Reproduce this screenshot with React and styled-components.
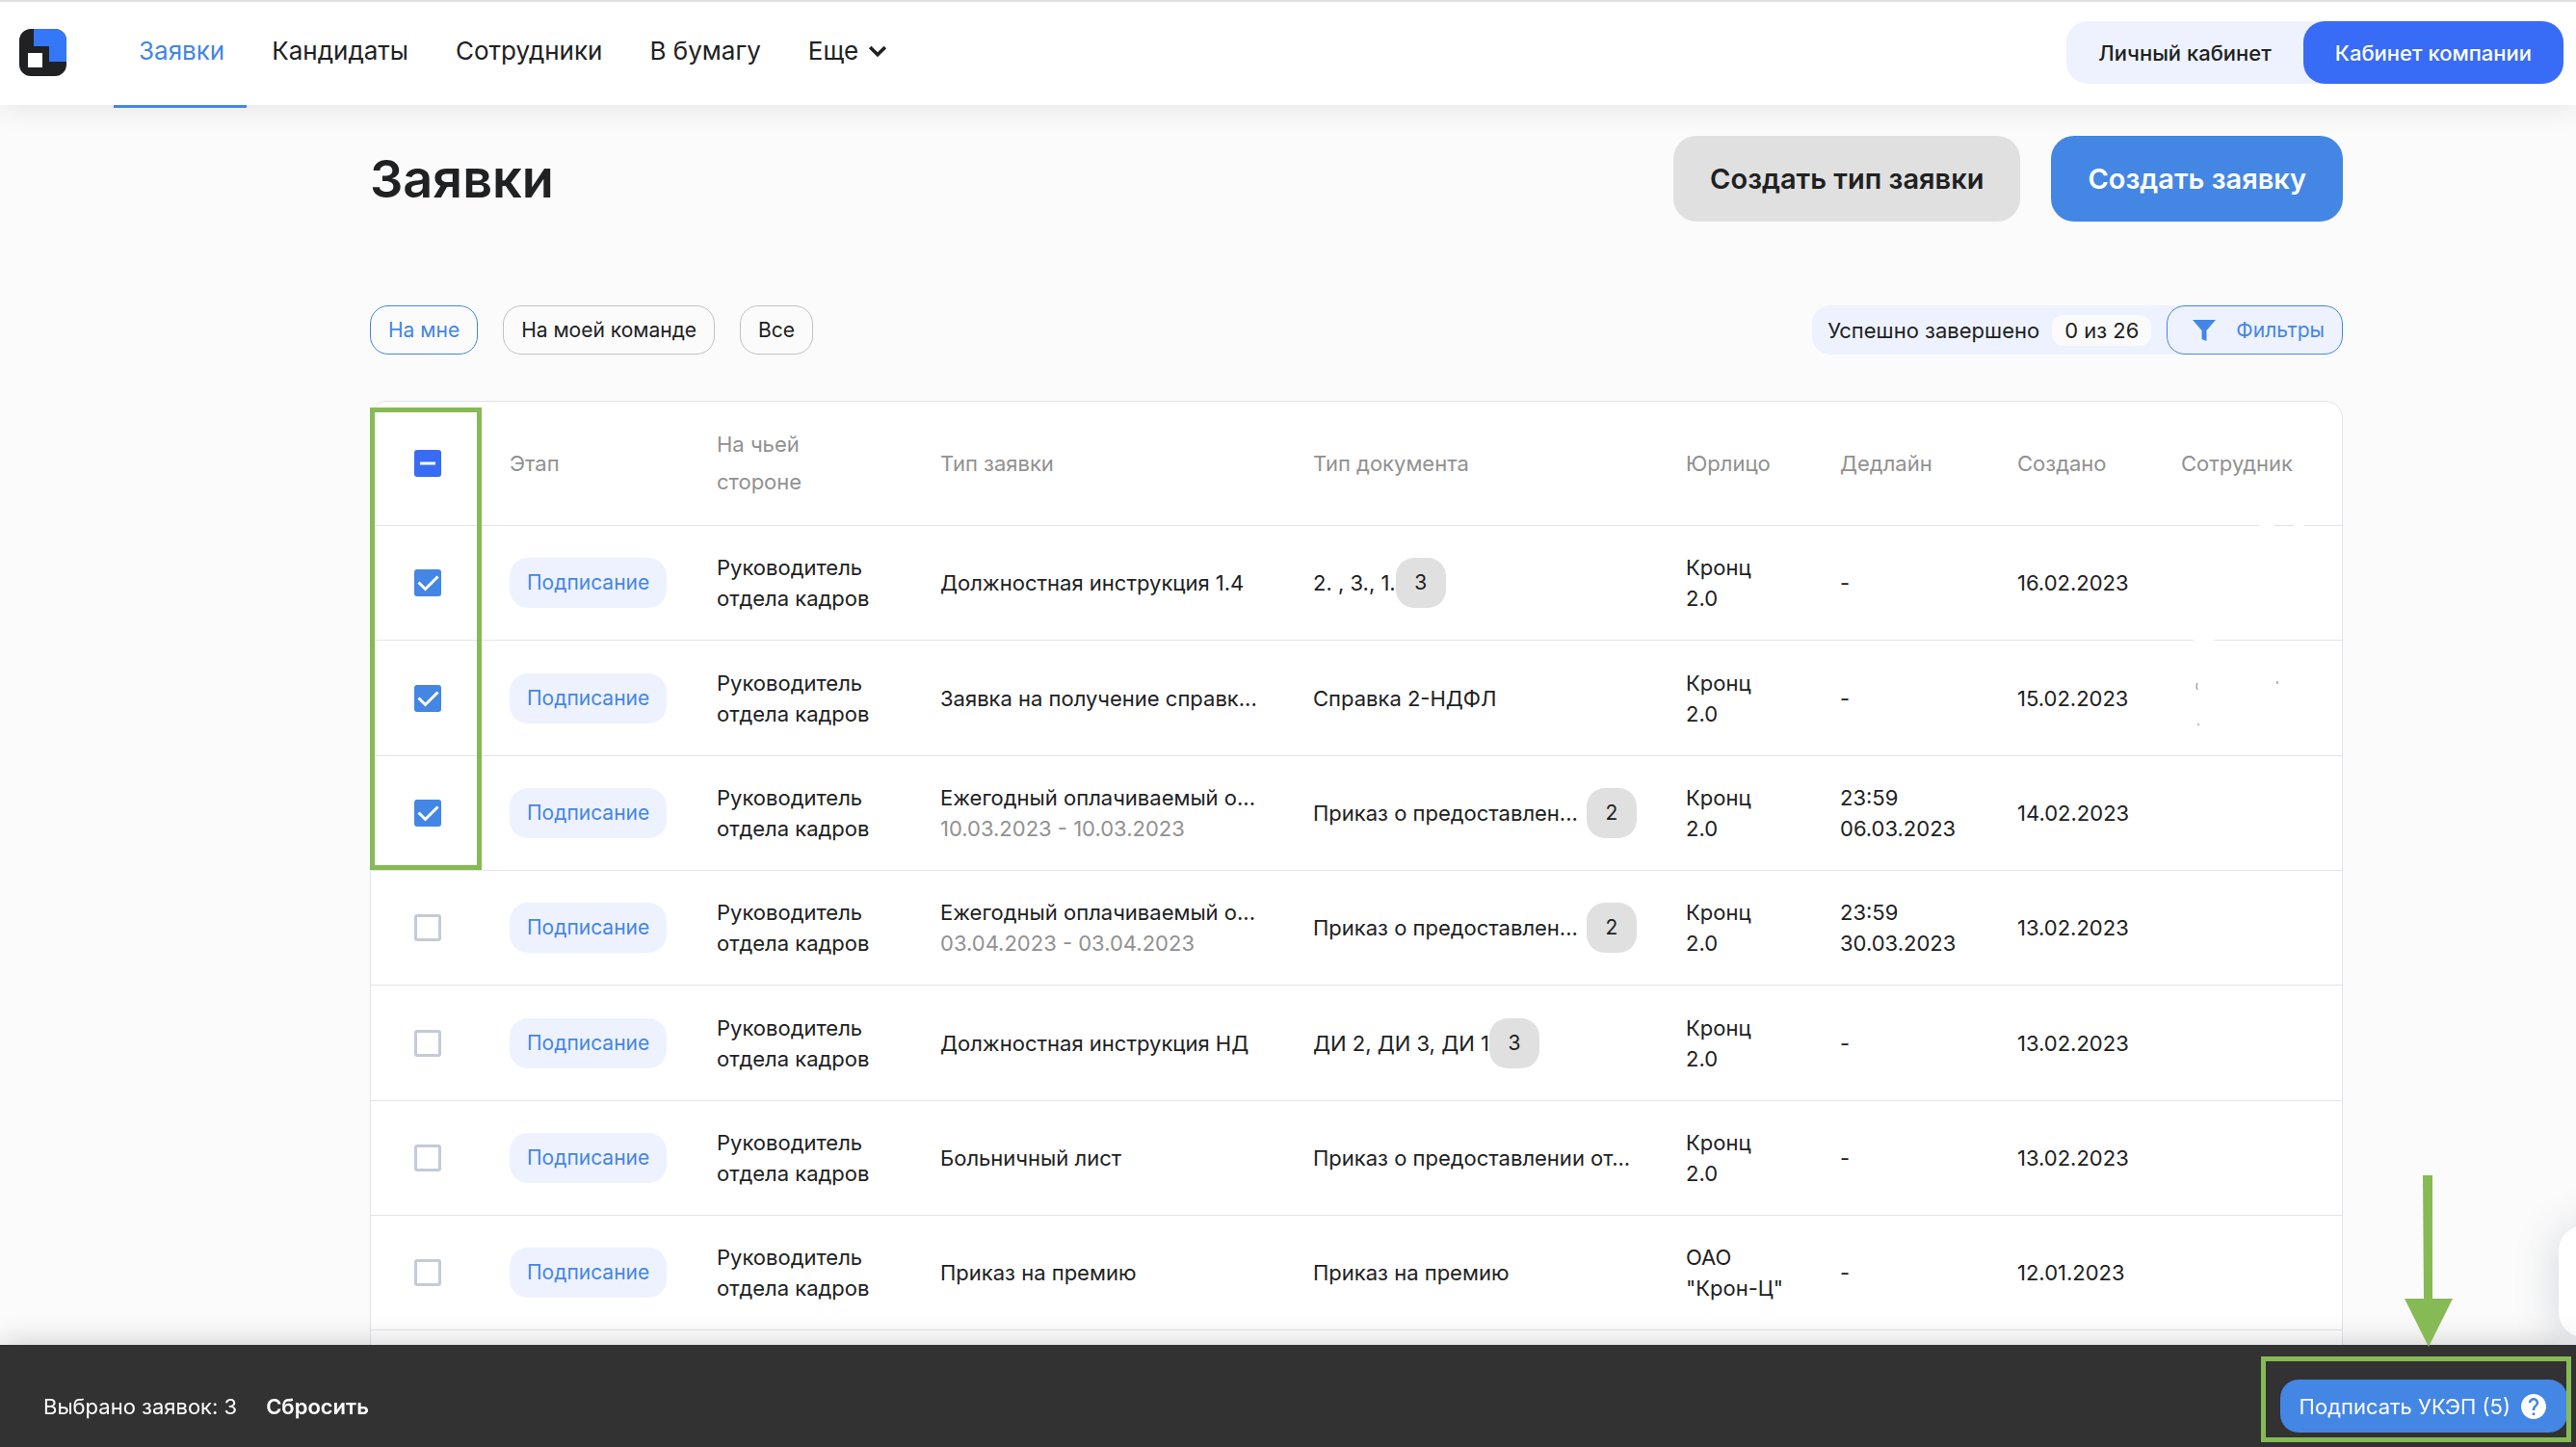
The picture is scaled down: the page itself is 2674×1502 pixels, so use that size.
import React, { useEffect, useRef, useState } from 'react';
import styled, { createGlobalStyle, css } from 'styled-components';

const GlobalStyle = createGlobalStyle`
  * { box-sizing: border-box; }
  html, body { margin: 0; }
  body {
    background: #fbfbfb;
    color: #202122;
    font-family: Inter, "Liberation Sans", sans-serif;
    font-size: 22px;
    line-height: 32px;
    overflow: hidden;
  }
  button, input { font: inherit; color: inherit; margin: 0; }
  button { border: 0; padding: 0; cursor: pointer; white-space: nowrap; }
`;

const blue = '#4486e4';
const royal = '#386cf6';
const green = '#86ba55';
const line = '#e1e4ea';

const Page = styled.div`
  height: 100vh;
  overflow: hidden;
`;

const Header = styled.header`
  position: relative;
  display: flex;
  align-items: center;
  height: 109px;
  padding: 0 13px 0 20px;
  background: #fff;
  box-shadow: inset 0 3px 0 -1px #e0e0e0, 0 4px 28px rgba(0, 0, 0, 0.09);
`;

const Nav = styled.nav`
  display: flex;
  align-self: stretch;
  margin-left: 49px;
`;

const navItem = css`
  display: flex;
  align-items: center;
  gap: 10px;
  height: 112px;
  padding: 0 23px 4px 26px;
  font-size: 26px;
  color: inherit;
  background: none;
  text-decoration: none;
  border-bottom: 3px solid transparent;
`;

const NavLink = styled.a`
  ${navItem}
  ${(p) => p.$active && `color: ${blue}; border-color: ${blue};`}
`;

const NavButton = styled.button`
  ${navItem}
`;

const CabinetSwitch = styled.div`
  display: flex;
  margin-left: auto;
  border-radius: 22px;
  background: #eef2fe;
`;

const CabinetButton = styled.button`
  height: 65px;
  padding: 0 33px;
  border-radius: 22px;
  font-weight: 500;
  background: ${(p) => (p.$active ? royal : 'transparent')};
  color: ${(p) => (p.$active ? '#fff' : 'inherit')};
`;

const Main = styled.main`
  padding: 32px 242px 0 384px;
`;

const TitleRow = styled.div`
  display: flex;
  align-items: center;
  gap: 32px;
`;

const Title = styled.h1`
  flex: 1;
  margin: 0;
  font-size: 54px;
  line-height: 64px;
  font-weight: 600;
`;

const ActionButton = styled.button`
  height: 89px;
  padding: 0 38px;
  border-radius: 24px;
  font-size: 29px;
  font-weight: 600;
  background: ${(p) => (p.$primary ? blue : '#e0e0e0')};
  color: ${(p) => (p.$primary ? '#fff' : 'inherit')};
`;

const FilterRow = styled.div`
  display: flex;
  align-items: center;
  gap: 26px;
  margin-top: 87px;
`;

const Chip = styled.button`
  display: flex;
  align-items: center;
  gap: 20px;
  height: 51px;
  padding: 0 18px 0 ${(p) => (p.$withIcon ? '25px' : '18px')};
  border: 1px solid ${(p) => (p.$active ? blue : '#c2c2c2')};
  border-radius: 19px;
  font-size: 21px;
  background: transparent;
  color: ${(p) => (p.$active ? blue : 'inherit')};
`;

const Completed = styled.div`
  display: flex;
  align-items: center;
  margin-left: auto;
  padding-left: 16px;
  border-radius: 19px;
  background: #eef2fe;
`;

const Counter = styled.span`
  margin: 0 16px 0 13px;
  padding: 0 13px;
  border-radius: 12px;
  background: #fbfbfb;
`;

const TableCard = styled.div`
  position: relative;
  margin-top: 48px;
  border: 1px solid ${line};
  border-radius: 18px;
  background: #fff;
`;

const Table = styled.table`
  width: 100%;
  table-layout: fixed;
  border-collapse: separate;
  border-spacing: 0;
`;

const Col = styled.col`
  width: ${(p) => p.$w};
`;

const HeadCell = styled.th`
  height: 129px;
  padding: 0 24px 0 27px;
  border-bottom: 1px solid ${line};
  text-align: left;
  font-weight: 400;
  line-height: 39px;
  white-space: pre-line;
  color: #919191;
`;

const Row = styled.tr`
  height: 119px;
  &:nth-child(3n + 2) { height: 120px; }
`;

const Cell = styled.td`
  position: relative;
  padding: 0 24px 0 27px;
  border-bottom: 1px solid ${line};
  white-space: pre-line;
`;

const CheckLabel = styled.label`
  display: flex;
  width: 28px;
  margin: 0 auto;
`;

const CheckHead = styled(HeadCell)`
  padding: 0;
`;

const CheckCell = styled(Cell)`
  padding: 0;
`;

const Checkbox = styled.input`
  appearance: none;
  width: 28px;
  height: 28px;
  border: 3px solid #c4cbd7;
  border-radius: 3px;
  background: #fff;
  &:checked {
    border-color: ${blue};
    background-color: ${blue};
  }
  &:indeterminate {
    border-color: ${royal};
    background-color: ${royal};
  }
`;

const CheckMark = styled.svg`
  position: absolute;
  width: 28px;
  height: 28px;
  pointer-events: none;
`;

const Status = styled.span`
  display: inline-flex;
  align-items: center;
  height: 52px;
  padding: 0 18px;
  border-radius: 19px;
  font-size: 21px;
  background: #eef2fe;
  color: ${blue};
`;

const Ellipsis = styled.div`
  overflow: hidden;
  white-space: nowrap;
`;

const Period = styled.div`
  color: #919191;
`;

const DocLine = styled.div`
  display: flex;
  align-items: center;
  white-space: pre;
`;

const Badge = styled.span`
  display: flex;
  align-items: center;
  justify-content: center;
  flex: none;
  width: 52px;
  height: 52px;
  margin-left: ${(p) => (p.$spaced ? 'auto' : '0')};
  border-radius: 19px;
  font-size: 21px;
  background: #e0e0e0;
`;

const MaskedName = styled.svg`
  position: absolute;
  left: 0;
  top: -2px;
  width: 194px;
  height: 122px;
`;

const SelectionBar = styled.footer`
  position: fixed;
  left: 0;
  right: 0;
  bottom: 0;
  display: flex;
  align-items: center;
  gap: 30px;
  padding: 36px 9px 15px 45px;
  background: #323232;
  color: #fff;
  box-shadow: 0 -4px 28px rgba(0, 0, 0, 0.16);
`;

const ResetButton = styled.button`
  background: none;
  font-weight: 600;
`;

const SignButton = styled.button`
  display: flex;
  align-items: center;
  gap: 11px;
  height: 55px;
  margin-left: auto;
  padding: 0 22px 0 20px;
  border-radius: 19px;
  background: ${blue};
`;

const ChatTab = styled.button`
  position: fixed;
  right: -100px;
  bottom: 114px;
  width: 118px;
  height: 116px;
  border-radius: 26px;
  background: #fff;
  box-shadow: 0 4px 48px rgba(50, 60, 110, 0.2);
`;

const ColumnFrame = styled.div`
  position: absolute;
  left: -1px;
  top: 6px;
  width: 116px;
  height: 480px;
  border: 5px solid ${green};
  pointer-events: none;
`;

const SignFrame = styled.div`
  position: fixed;
  right: 5px;
  bottom: 5px;
  width: 322px;
  height: 89px;
  border: 5px solid ${green};
  pointer-events: none;
`;

const Arrow = styled.svg`
  position: fixed;
  right: 128px;
  bottom: 104px;
  width: 50px;
  height: 178px;
`;

const Logo = () => (
  <svg width="49" height="49" viewBox="0 0 49 49" aria-hidden="true">
    <rect width="49" height="49" rx="12" fill="#202122" />
    <path d="M15 0h22a12 12 0 0 1 12 12v22H31V18H15z" fill="#3478f8" />
    <rect x="9" y="25" width="15" height="15" fill="#fff" />
  </svg>
);

const Chevron = () => (
  <svg width="20" height="14" viewBox="0 0 20 14" fill="none" aria-hidden="true">
    <path d="M2.200 3l7.800 7.800L17.800 3" stroke="#202122" strokeWidth="3.600" />
  </svg>
);

const Funnel = () => (
  <svg width="26" height="22" viewBox="0 0 26 22" aria-hidden="true">
    <path d="M1 0h24l-9.500 11v11l-5-2v-9z" fill={blue} />
  </svg>
);

const Question = () => (
  <svg width="26" height="26" viewBox="2 2 20 20" aria-hidden="true">
    <path
      fill="#fff"
      d="M12 2C6.48 2 2 6.48 2 12s4.480 10 10 10 10-4.480 10-10S17.520 2 12 2zm1 17h-2v-2h2v2zm2.070-7.750l-.9.920C13.450 12.900 13 13.500 13 15h-2v-.5c0-1.100.45-2.100 1.170-2.830l1.240-1.260c.37-.36.59-.86.59-1.410 0-1.100-.9-2-2-2s-2 .9-2 2H8c0-2.210 1.790-4 4-4s4 1.790 4 4c0 .88-.36 1.680-.93 2.250z"
    />
  </svg>
);

function Check({ label, checked, mixed, onChange }) {
  const ref = useRef(null);
  useEffect(() => {
    ref.current.indeterminate = !!mixed;
  }, [mixed]);
  return (
    <CheckLabel>
      <Checkbox ref={ref} type="checkbox" aria-label={label} checked={checked} onChange={onChange} />
      {(checked || mixed) && (
        <CheckMark viewBox="0 0 28 28" fill="none" stroke="#fff" strokeWidth="3">
          <path d={mixed ? 'M6 14h16' : 'M4.500 13.500l7 7L24.500 7.500'} />
        </CheckMark>
      )}
    </CheckLabel>
  );
}

const cronz = 'Кронц\n2.0';

const requests = [
  { type: 'Должностная инструкция 1.4', doc: '2. , 3., 1.', count: 3, org: cronz, due: '-', created: '16.02.2023' },
  { type: 'Заявка на получение справк...', doc: 'Справка 2-НДФЛ', org: cronz, due: '-', created: '15.02.2023' },
  { type: 'Ежегодный оплачиваемый о...', period: '10.03.2023 - 10.03.2023', doc: 'Приказ о предоставлен...', count: 2, spaced: true, org: cronz, due: '23:59\n06.03.2023', created: '14.02.2023' },
  { type: 'Ежегодный оплачиваемый о...', period: '03.04.2023 - 03.04.2023', doc: 'Приказ о предоставлен...', count: 2, spaced: true, org: cronz, due: '23:59\n30.03.2023', created: '13.02.2023' },
  { type: 'Должностная инструкция НД', doc: 'ДИ 2, ДИ 3, ДИ 1', count: 3, org: cronz, due: '-', created: '13.02.2023' },
  { type: 'Больничный лист', doc: 'Приказ о предоставлении от...', org: cronz, due: '-', created: '13.02.2023' },
  { type: 'Приказ на премию', doc: 'Приказ на премию', org: 'ОАО\n"Крон-Ц"', due: '-', created: '12.01.2023' },
];

const columns = ['117px', '215px', '232px', 'auto', 'auto', '160px', '184px', '170px', '194px'];
const headings = ['Этап', 'На чьей\nстороне', 'Тип заявки', 'Тип документа', 'Юрлицо', 'Дедлайн', 'Создано', 'Сотрудник'];

export default function App() {
  const [selected, setSelected] = useState([0, 1, 2]);
  const toggle = (i) =>
    setSelected((s) => (s.includes(i) ? s.filter((x) => x !== i) : [...s, i]));
  const all = selected.length === requests.length;

  return (
    <Page>
      <GlobalStyle />
      <Header>
        <Logo />
        <Nav>
          <NavLink href="#requests" $active>Заявки</NavLink>
          <NavLink href="#candidates">Кандидаты</NavLink>
          <NavLink href="#employees">Сотрудники</NavLink>
          <NavLink href="#paper">В бумагу</NavLink>
          <NavButton type="button">Еще <Chevron /></NavButton>
        </Nav>
        <CabinetSwitch>
          <CabinetButton type="button">Личный кабинет</CabinetButton>
          <CabinetButton type="button" $active>Кабинет компании</CabinetButton>
        </CabinetSwitch>
      </Header>

      <Main>
        <TitleRow>
          <Title>Заявки</Title>
          <ActionButton type="button">Создать тип заявки</ActionButton>
          <ActionButton type="button" $primary>Создать заявку</ActionButton>
        </TitleRow>

        <FilterRow>
          <Chip type="button" $active>На мне</Chip>
          <Chip type="button">На моей команде</Chip>
          <Chip type="button">Все</Chip>
          <Completed>
            Успешно завершено
            <Counter>0 из 26</Counter>
            <Chip type="button" $active $withIcon><Funnel />Фильтры</Chip>
          </Completed>
        </FilterRow>

        <TableCard>
          <Table>
            <colgroup>
              {columns.map((w, i) => <Col key={i} $w={w} />)}
            </colgroup>
            <thead>
              <tr>
                <CheckHead>
                  <Check
                    label="Выбрать все"
                    checked={all}
                    mixed={selected.length > 0 && !all}
                    onChange={() => setSelected(all ? [] : requests.map((_, i) => i))}
                  />
                </CheckHead>
                {headings.map((h) => <HeadCell key={h}>{h}</HeadCell>)}
              </tr>
            </thead>
            <tbody>
              {requests.map((r, i) => (
                <Row key={i}>
                  <CheckCell>
                    <Check label={r.type} checked={selected.includes(i)} onChange={() => toggle(i)} />
                  </CheckCell>
                  <Cell><Status>Подписание</Status></Cell>
                  <Cell>{'Руководитель\nотдела кадров'}</Cell>
                  <Cell>
                    <Ellipsis>{r.type}</Ellipsis>
                    {r.period && <Period>{r.period}</Period>}
                  </Cell>
                  <Cell>
                    <DocLine>
                      {r.doc}
                      {r.count && <Badge $spaced={r.spaced}>{r.count}</Badge>}
                    </DocLine>
                  </Cell>
                  <Cell>{r.org}</Cell>
                  <Cell>{r.due}</Cell>
                  <Cell>{r.created}</Cell>
                  <Cell>
                    {i === 0 && (
                      <MaskedName viewBox="0 0 194 122" aria-hidden="true">
                        <path d="M108 1.500h16M144 1.500h11M40 120.500h21" stroke="#fff" strokeWidth="3" />
                      </MaskedName>
                    )}
                    {i === 1 && (
                      <MaskedName viewBox="0 0 194 122" aria-hidden="true">
                        <path d="M44 46q-2 3 0 7M127 44v3M44 89h2" stroke="#777" fill="none" />
                      </MaskedName>
                    )}
                  </Cell>
                </Row>
              ))}
              <Row aria-hidden="true"><Cell colSpan={9} /></Row>
            </tbody>
          </Table>
          <ColumnFrame />
        </TableCard>
      </Main>

      <ChatTab type="button" aria-label="Чат" />
      <SelectionBar>
        <span>Выбрано заявок: {selected.length}</span>
        <ResetButton type="button" onClick={() => setSelected([])}>Сбросить</ResetButton>
        <SignButton type="button">Подписать УКЭП (5) <Question /></SignButton>
      </SelectionBar>
      <SignFrame />
      <Arrow viewBox="0 0 50 178" aria-hidden="true">
        <path d="M19 0h10v128h21l-25 50L0 128h20z" fill={green} />
      </Arrow>
    </Page>
  );
}
